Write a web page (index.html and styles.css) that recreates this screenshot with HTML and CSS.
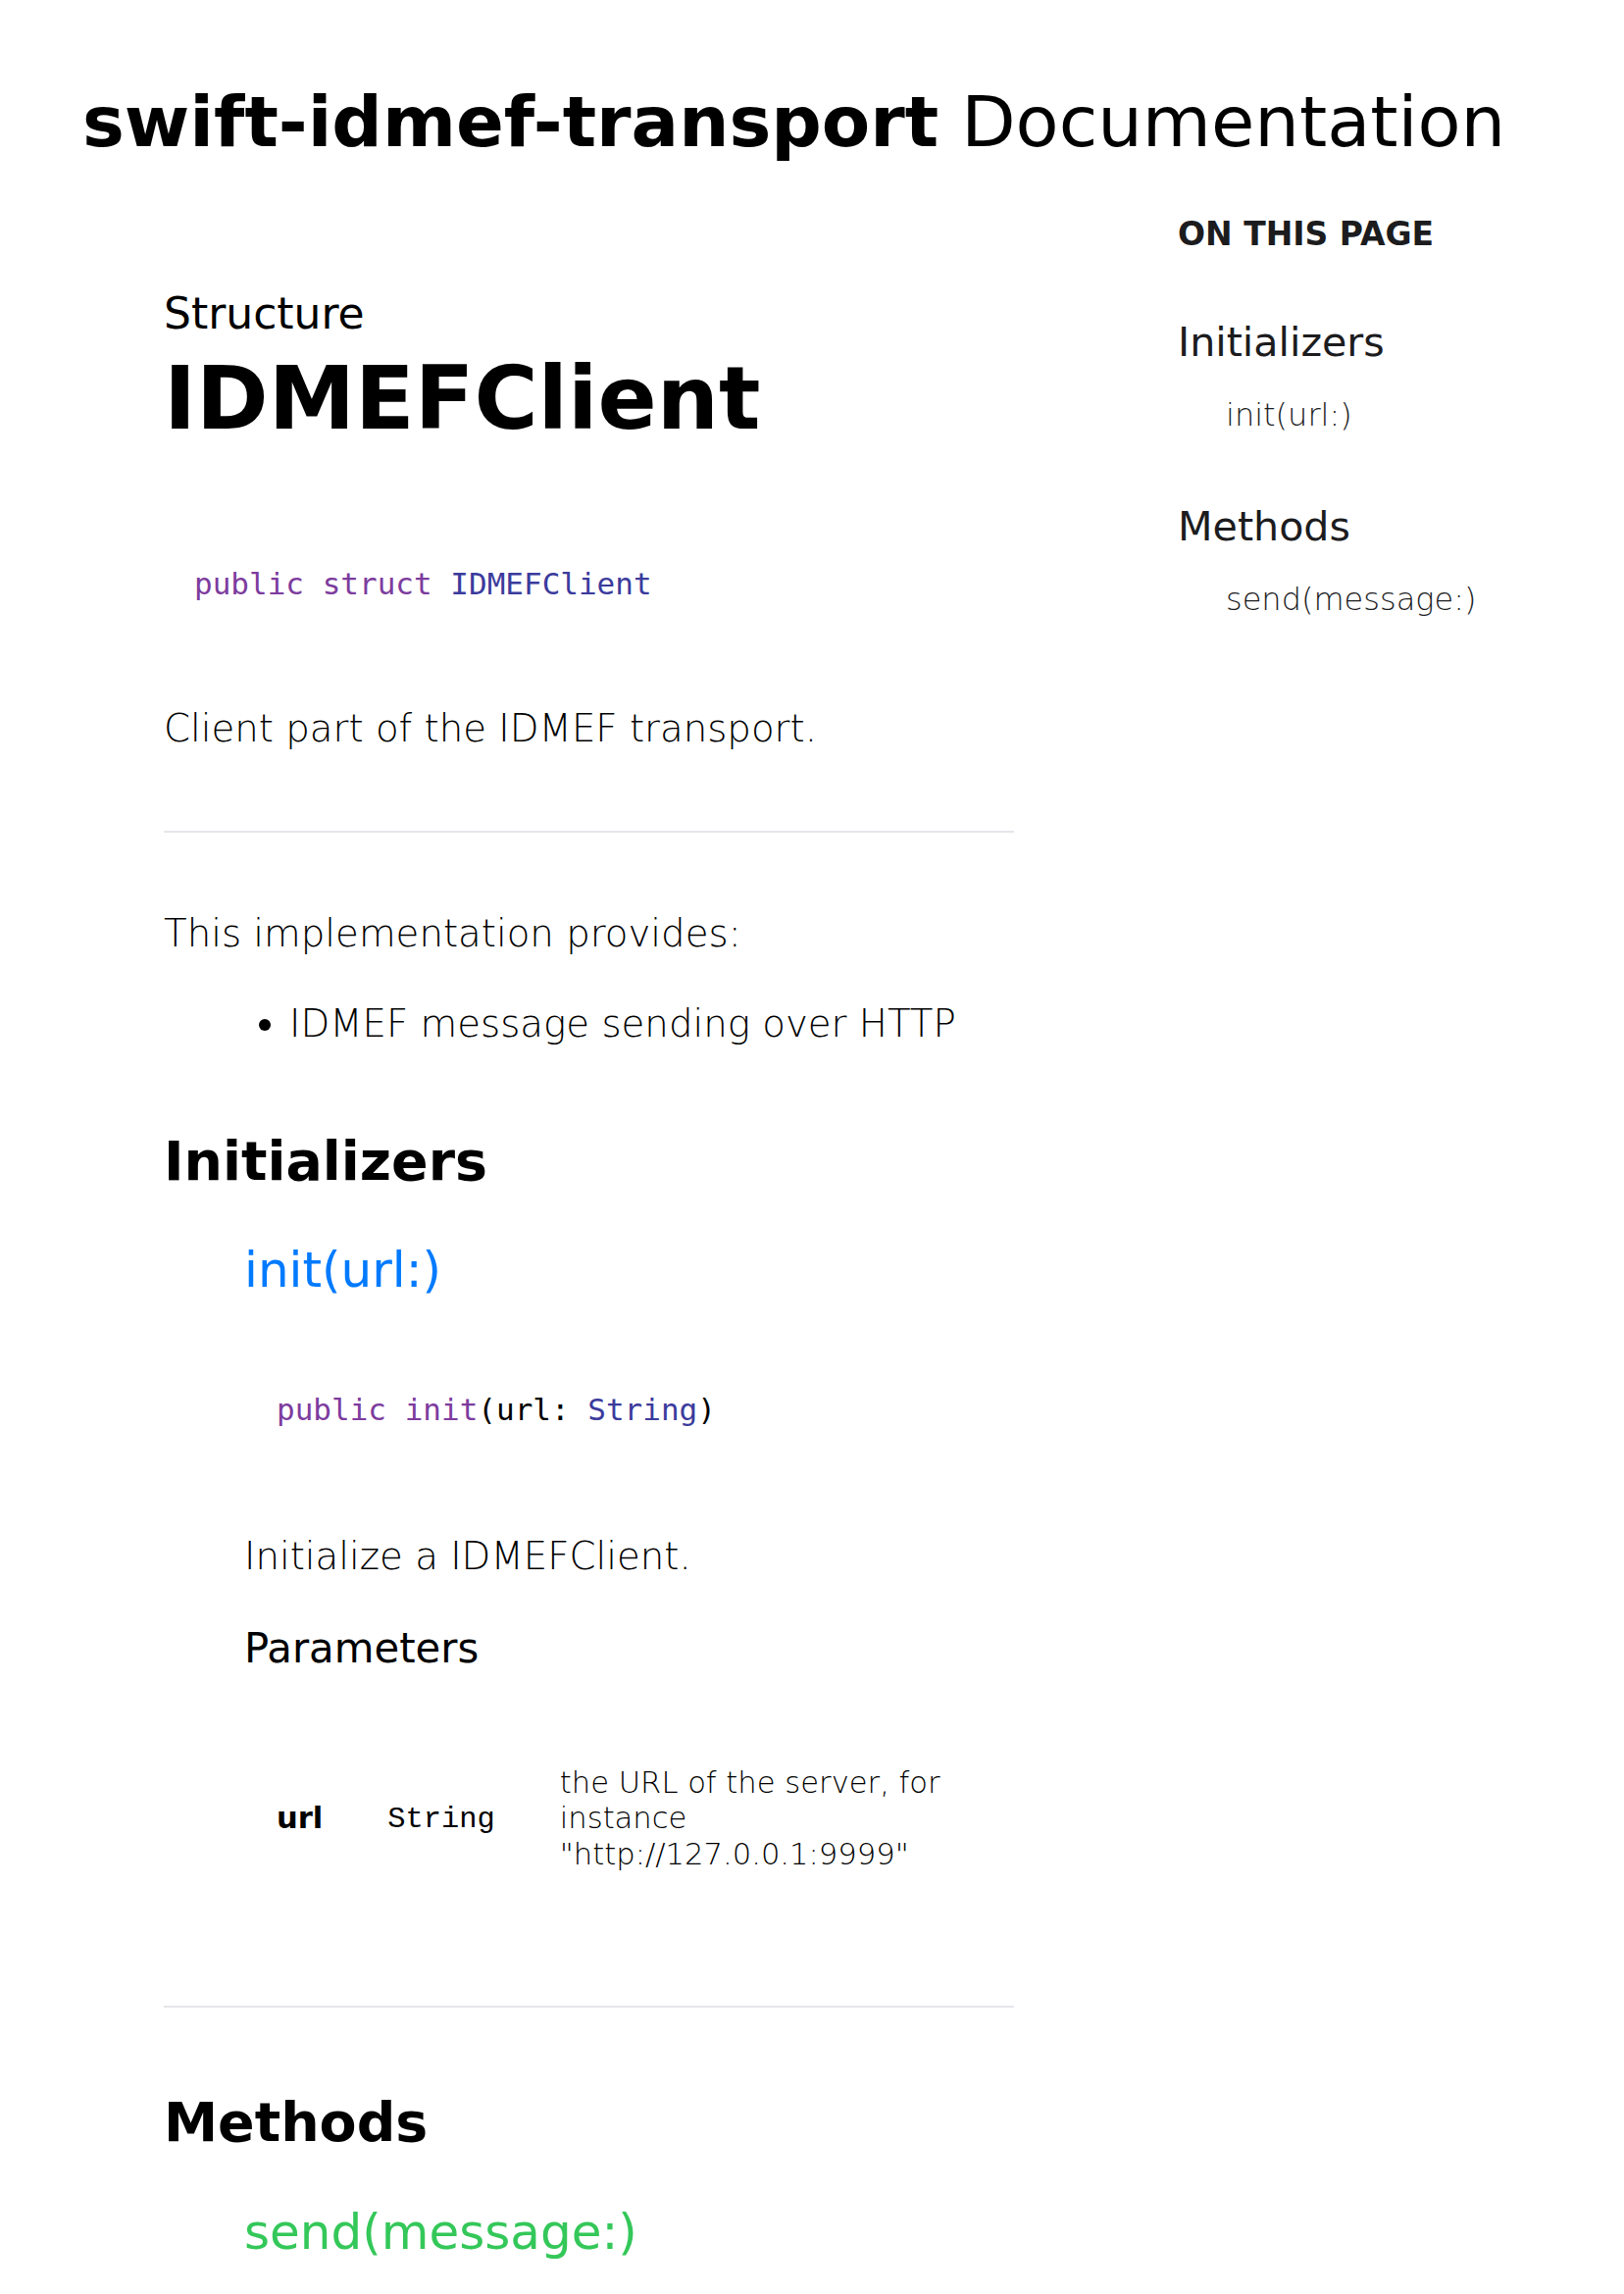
FILE: index.html
```html
<!DOCTYPE html>
<html lang="en">
<head>
<meta charset="utf-8">
<title>IDMEFClient - swift-idmef-transport Documentation</title>
<link rel="stylesheet" href="styles.css">
</head>
<body>
<header class="site-header">
  <h1 class="site-title"><strong>swift-idmef-transport</strong> Documentation</h1>
</header>
<div class="layout">
  <main class="content">
    <p class="kind">Structure</p>
    <h1 class="name">IDMEFClient</h1>
    <div class="declaration"><pre class="code"><code><span class="kw">public</span> <span class="kw">struct</span> <span class="ty">IDMEFClient</span></code></pre></div>
    <p class="text summary">Client part of the IDMEF transport.</p>
    <hr class="rule">
    <p class="text discussion">This implementation provides:</p>
    <ul class="list">
      <li>IDMEF message sending over HTTP</li>
    </ul>
    <section class="members">
      <h2 class="section-title">Initializers</h2>
      <div class="member">
        <h3 class="member-name init-link">init(url:)</h3>
        <pre class="code"><code><span class="kw">public</span> <span class="kw">init</span>(url: <span class="ty">String</span>)</code></pre>
        <p class="text member-summary">Initialize a IDMEFClient.</p>
        <h4 class="params-title">Parameters</h4>
        <table class="params">
          <tbody>
            <tr>
              <th class="param-name">url</th>
              <td class="param-type"><code>String</code></td>
              <td class="param-desc">the URL of the server, for instance "http://127.0.0.1:9999"</td>
            </tr>
          </tbody>
        </table>
      </div>
    </section>
    <hr class="rule rule-2">
    <section class="members">
      <h2 class="section-title methods-title">Methods</h2>
      <div class="member">
        <h3 class="member-name method-link">send(message:)</h3>
      </div>
    </section>
  </main>
  <aside class="toc">
    <p class="toc-title">ON THIS PAGE</p>
    <p class="toc-group">Initializers</p>
    <p class="toc-item">init(url:)</p>
    <p class="toc-group toc-group-2">Methods</p>
    <p class="toc-item">send(message:)</p>
  </aside>
</div>
</body>
</html>
```

FILE: styles.css
```css
html, body {
  margin: 0;
  padding: 0;
  background: #ffffff;
}

body {
  font-family: "DejaVu Sans", sans-serif;
  color: #000000;
  line-height: 1.2;
  width: 1656px;
  min-height: 2339px;
  overflow: hidden;
}

p, h1, h2, h3, h4, ul, pre, table {
  margin: 0;
}

.site-header {
  padding: 81px 0 0 84px;
}

.site-title {
  font-size: 72px;
  font-weight: 400;
  line-height: 1.2;
  white-space: nowrap;
}

.site-title strong {
  font-weight: 700;
}

.layout {
  display: flex;
  align-items: flex-start;
}

.content {
  width: 867px;
  margin-left: 167px;
  flex: none;
}

.kind {
  font-size: 44px;
  font-weight: 400;
  margin-top: 127px;
}

.name {
  font-size: 88.8px;
  font-weight: 700;
  margin-top: 7px;
}

.code {
  font-family: "Liberation Mono", monospace;
  font-size: 31px;
  line-height: 1.2;
  padding-left: 31px;
  color: #000000;
}

.declaration .code {
  margin-top: 116px;
}

.kw {
  color: #7d3c9e;
}

.ty {
  color: #3b3b9c;
}

.text {
  font-size: 38.7px;
  font-weight: 200;
}

.summary {
  margin-top: 104px;
}

.rule {
  border: none;
  height: 2px;
  background: #e6e6eb;
  margin: 81px 0 0 0;
}

.discussion {
  margin-top: 80px;
}

.list {
  font-size: 38.7px;
  font-weight: 200;
  margin-top: 45.5px;
  padding-left: 128px;
}

.section-title {
  font-size: 55.4px;
  font-weight: 700;
  margin-top: 83px;
}

.member {
  margin-left: 82px;
}

.member-name {
  font-size: 50px;
  font-weight: 400;
  margin-top: 48px;
}

.init-link {
  color: #007aff;
}

.method-link {
  color: #34c759;
}

.member .code {
  margin-top: 94px;
  padding-left: 33px;
}

.member-summary {
  margin-top: 105.5px;
}

.params-title {
  font-size: 41.8px;
  font-weight: 400;
  margin-top: 46px;
}

.params {
  width: 100%;
  border-collapse: collapse;
  margin-top: 93px;
  font-size: 30.6px;
}

.params th,
.params td {
  padding: 0 33px;
  vertical-align: middle;
  text-align: left;
  line-height: 1.2;
}

.param-name {
  font-weight: 700;
}

.param-type code {
  font-family: "Liberation Mono", monospace;
  font-size: 30.4px;
}

.param-desc {
  font-weight: 200;
}

.rule-2 {
  margin-top: 135px;
}

.methods-title {
  margin-top: 84.5px;
}

.toc {
  margin-left: 167px;
  padding-top: 52px;
  flex: none;
}

.toc-title {
  font-size: 33px;
  font-weight: 700;
  color: #1c1c1e;
}

.toc-group {
  font-size: 41.2px;
  font-weight: 400;
  color: #1c1c1e;
  margin-top: 66px;
}

.toc-group-2 {
  margin-top: 70px;
}

.toc-item {
  font-size: 32px;
  font-weight: 200;
  color: #1c1c1e;
  margin-top: 30px;
  padding-left: 49px;
}
```
